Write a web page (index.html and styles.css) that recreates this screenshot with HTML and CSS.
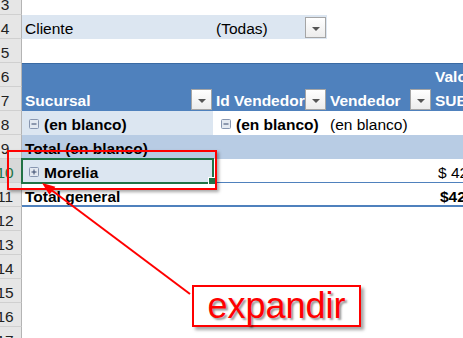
FILE: index.html
```html
<!DOCTYPE html>
<html lang="es">
<head>
    <meta charset="UTF-8">
    <title>Tabla dinámica - expandir</title>
    <link rel="stylesheet" href="styles.css">
</head>
<body>

<div class="sheet">
    <div class="row first">
        <div class="rh"><span>3</span></div>
        <div class="c"></div><div class="c"></div><div class="c"></div><div class="c"></div>
    </div>
    <div class="row">
        <div class="rh"><span>4</span></div>
        <div class="c lt"><span class="t">Cliente</span></div>
        <div class="c lt"><span class="t">(Todas)</span><span class="dd"><i></i></span></div>
        <div class="c"></div><div class="c"></div>
    </div>
    <div class="row">
        <div class="rh"><span>5</span></div>
        <div class="c"></div><div class="c"></div><div class="c"></div><div class="c"></div>
    </div>
    <div class="row head top">
        <div class="rh"><span>6</span></div>
        <div class="c"></div><div class="c"></div><div class="c"></div>
        <div class="c"><span class="t">Valores</span></div>
    </div>
    <div class="row head">
        <div class="rh"><span>7</span></div>
        <div class="c"><span class="t">Sucursal</span><span class="dd"><i></i></span></div>
        <div class="c"><span class="t">Id Vendedor</span><span class="dd"><i></i></span></div>
        <div class="c"><span class="t">Vendedor</span><span class="dd"><i></i></span></div>
        <div class="c"><span class="t">SUBTOTAL</span></div>
    </div>
    <div class="row">
        <div class="rh"><span>8</span></div>
        <div class="c lt"><span class="t b ind"><svg class="tog" width="10" height="10" viewBox="0 0 10 10"><rect x="0.5" y="0.5" width="9" height="9" rx="1" fill="#e3e9f1" stroke="#8796b0"/><path d="M2.5 5h5" stroke="#34476a"/></svg>(en blanco)</span></div>
        <div class="c"><span class="t b ind2"><svg class="tog" width="10" height="10" viewBox="0 0 10 10"><rect x="0.5" y="0.5" width="9" height="9" rx="1" fill="#e3e9f1" stroke="#8796b0"/><path d="M2.5 5h5" stroke="#34476a"/></svg>(en blanco)</span></div>
        <div class="c"><span class="t">(en blanco)</span></div>
        <div class="c"></div>
    </div>
    <div class="row">
        <div class="rh"><span>9</span></div>
        <div class="c md"><span class="t b">Total (en blanco)</span></div>
        <div class="c md"></div><div class="c md"></div><div class="c md"></div>
    </div>
    <div class="row line">
        <div class="rh sel"><span>10</span></div>
        <div class="c lt picked"><span class="t b ind"><svg class="tog" width="10" height="10" viewBox="0 0 10 10"><rect x="0.5" y="0.5" width="9" height="9" rx="1" fill="#e3e9f1" stroke="#8796b0"/><path d="M2.5 5h5M5 2.5v5" stroke="#34476a"/></svg>Morelia</span></div>
        <div class="c"></div><div class="c"></div>
        <div class="c"><span class="t num">$ 42,150.00</span></div>
    </div>
    <div class="row total">
        <div class="rh"><span>11</span></div>
        <div class="c"><span class="t b">Total general</span></div>
        <div class="c"></div><div class="c"></div>
        <div class="c"><span class="t b num2">$42,150.00</span></div>
    </div>
    <div class="row"><div class="rh"><span>12</span></div></div>
    <div class="row"><div class="rh"><span>13</span></div></div>
    <div class="row"><div class="rh"><span>14</span></div></div>
    <div class="row"><div class="rh"><span>15</span></div></div>
    <div class="row"><div class="rh"><span>16</span></div></div>
    <div class="row"><div class="rh"><span>17</span></div></div>

    <!-- anotaciones -->
    <div class="mark"></div>
    <svg class="arrow" width="463" height="338" viewBox="0 0 463 338">
        <line x1="190" y1="294" x2="52" y2="190.5" stroke="#ff0000" stroke-width="2"/>
        <polygon points="42,183 55.4,186.8 49.4,194.8" fill="#ff0000"/>
    </svg>
    <div class="callout">expandir</div>
</div>

</body>
</html>
```

FILE: styles.css
```css
* { box-sizing: border-box; }
:root {
    --blue: #4f81bd;
    --light: #dce6f1;
    --mid: #b8cce4;
    --grid: #d0d0d0;
}
body {
    margin: 0px;
    font-family: "Liberation Sans", Arial, sans-serif;
    font-size: 15.5px;
    color: #000;
    background: #fff;
}
.sheet {
    position: relative;
    width: 463px;
    height: 338px;
    overflow: hidden;
}

.row {
    display: grid;
    grid-template-columns: 22px 191px 114px 105px 90px;
    height: 24px;
}
.row.first { height: 15px; }

/* cabecera de filas */
.rh {
    display: flex;
    align-items: flex-end;
    overflow: hidden;
    background: #e6e6e6;
    border-right: 1px solid #b4b4b4;
    border-bottom: 1px solid var(--grid);
    color: #222;
}
.rh span {
    flex: none;
    width: 32px;
    margin-left: -11px;
    text-align: center;
    line-height: 17px;
    padding-bottom: 1px;
}
.rh.sel { background: #d8d8d8; color: #217346; }

/* celdas */
.c {
    display: flex;
    align-items: flex-end;
    min-width: 0;
    overflow: hidden;
    white-space: nowrap;
}
.t {
    flex: 1 1 auto;
    min-width: 0;
    overflow: hidden;
    line-height: 17px;
    padding: 0px 3px 2px 3px;
}
.b { font-weight: bold; }
.lt { background: var(--light); }
.md { background: var(--mid); }

.ind { padding-left: 7px; }
.ind2 { padding-left: 8px; }
.tog {
    vertical-align: 1px;
    margin-right: 5px;
}
.num { padding-left: 6px; }
.num2 { padding-left: 8px; }

.dd {
    flex: none;
    display: flex;
    align-items: center;
    justify-content: center;
    width: 21px;
    height: 21px;
    margin: 0px 1px 1px 0px;
    background: linear-gradient(#ffffff, #ececec);
    border: 1px solid #a5a5a5;
}
.dd i {
    display: block;
    margin-top: 2px;
    border-left: 4px solid transparent;
    border-right: 4px solid transparent;
    border-top: 4px solid #555;
}

/* encabezado de la tabla dinámica */
.head .c {
    background: var(--blue);
    color: #fff;
    font-weight: bold;
}
.head.top .c { border-top: 1px solid #3a6aa3; }

.line .c { border-bottom: 1px solid var(--blue); }
.line .t { padding-bottom: 1px; }
.total .c { border-bottom: 2px solid var(--blue); }
.total .t { padding-bottom: 0px; }

.picked {
    position: relative;
    overflow: visible;
    outline: 2px solid #217346;
    outline-offset: -1px;
}
.picked::after {
    content: "";
    position: absolute;
    right: -3px;
    bottom: -3px;
    width: 6px;
    height: 6px;
    background: #217346;
    border: 1px solid #fff;
}

/* anotaciones encima de la hoja */
.mark {
    position: absolute;
    left: 7px;
    top: 150px;
    width: 210px;
    height: 40px;
    border: 2px solid #ff0000;
    box-shadow: 2px 2px 3px rgba(0, 0, 0, 0.35);
}
.arrow {
    position: absolute;
    left: 0px;
    top: 0px;
}
.callout {
    position: absolute;
    left: 192px;
    top: 285px;
    width: 169px;
    height: 42px;
    display: flex;
    align-items: center;
    justify-content: center;
    background: #fff;
    border: 2px solid #ff0000;
    box-shadow: 3px 3px 3px rgba(0, 0, 0, 0.35);
    color: #ff0000;
    font-size: 36px;
    line-height: 38px;
    text-shadow: 2px 2px 2px rgba(0, 0, 0, 0.4);
}
```
